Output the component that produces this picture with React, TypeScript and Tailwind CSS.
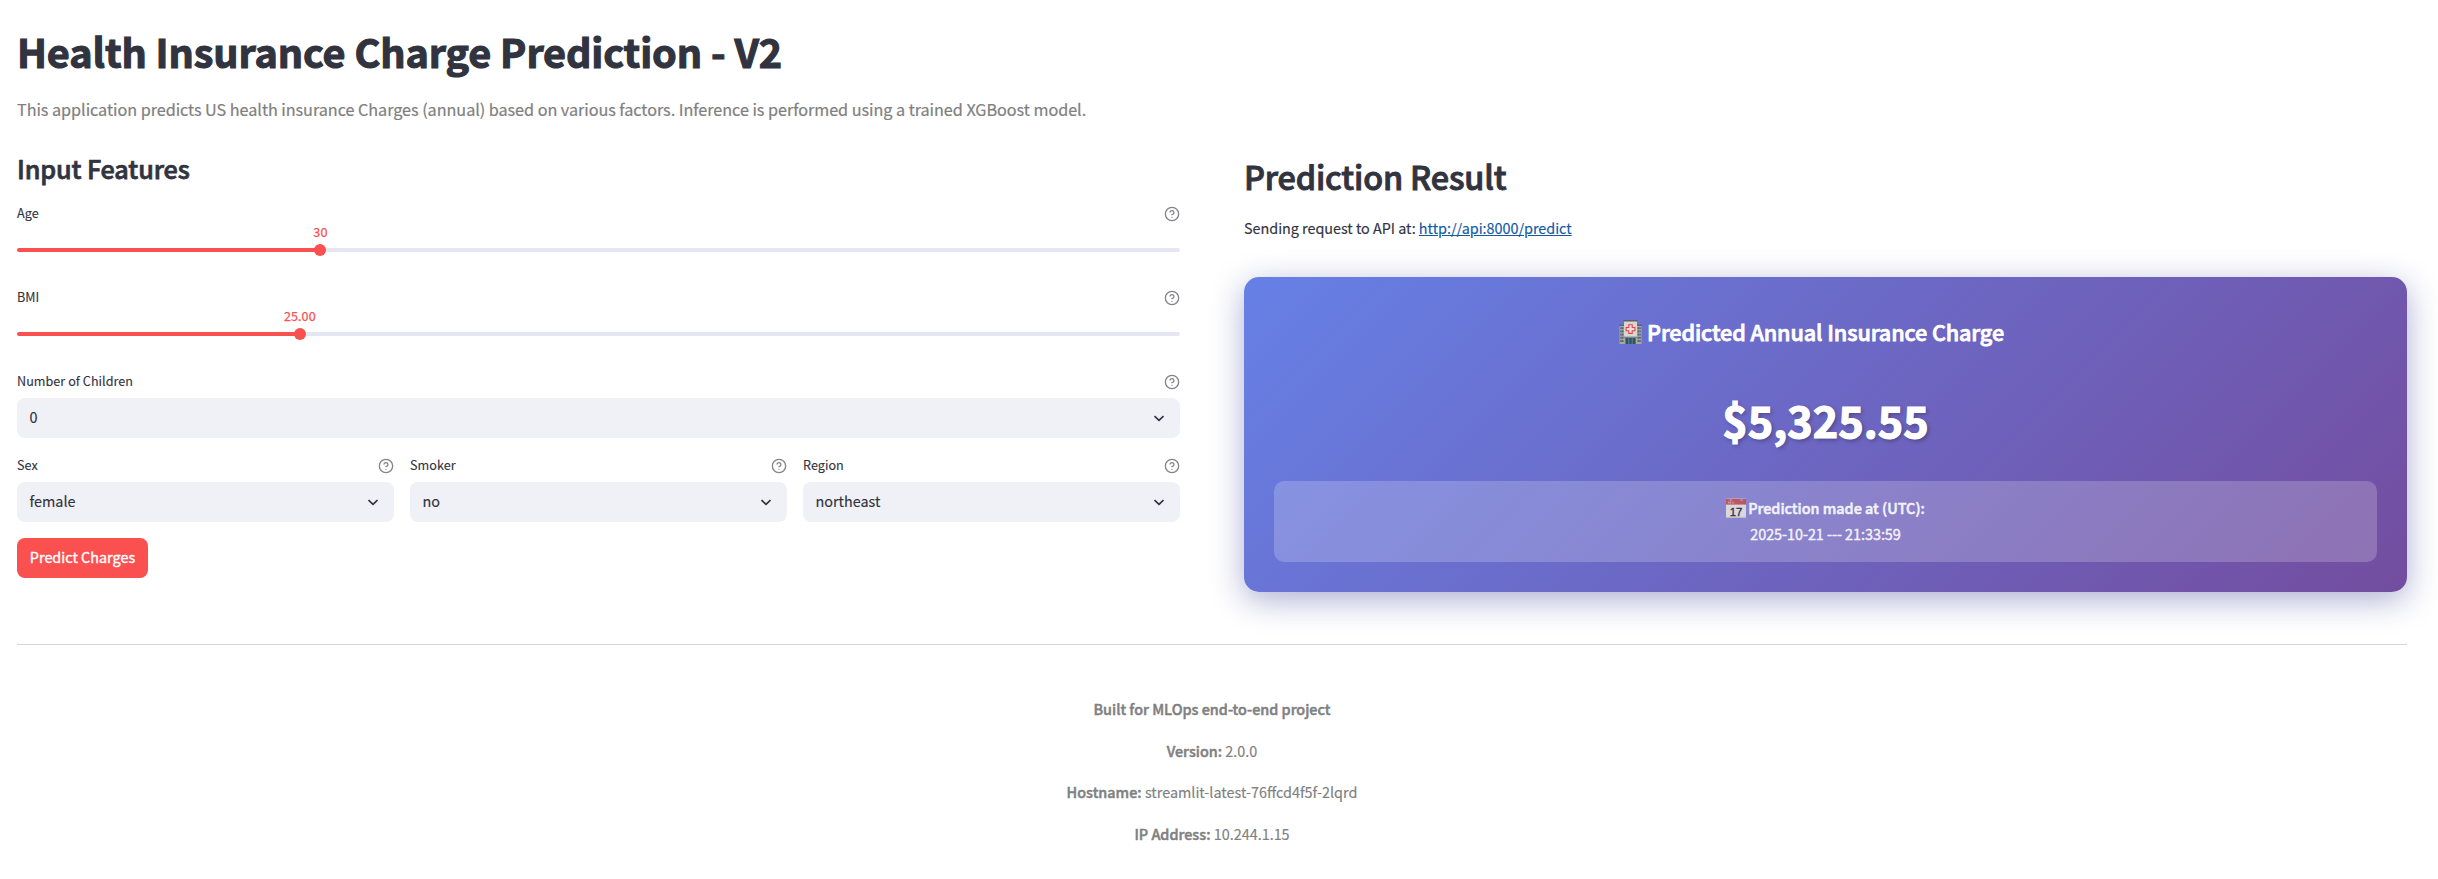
import React from "react";

function HelpIcon() {
  return (
    <svg className="size-4 shrink-0 text-[#83848c]" viewBox="0 0 24 24" fill="none" stroke="currentColor" strokeWidth="2" strokeLinecap="round" strokeLinejoin="round">
      <circle cx="12" cy="12" r="10" />
      <path d="M9.09 9a3 3 0 0 1 5.83 1c0 2-3 3-3 3" />
      <line x1="12" y1="17" x2="12.01" y2="17" />
    </svg>
  );
}

function Chevron() {
  return (
    <svg className="h-[7px] w-[10px] shrink-0 text-[#31333f]" viewBox="0 0 10 7" fill="none" stroke="currentColor" strokeWidth="1.7">
      <path d="M0.5 1.1 L5 5.4 L9.5 1.1" strokeLinejoin="round" />
    </svg>
  );
}

function HospitalIcon() {
  return (
    <svg className="h-6 w-[23px] shrink-0" viewBox="0 0 23 24">
      <rect x="0.5" y="5" width="22" height="19" fill="#a9a89f" />
      <rect x="0" y="4.6" width="5.5" height="1.4" fill="#5d6570" />
      <rect x="17.5" y="4.6" width="5.5" height="1.4" fill="#5d6570" />
      {[7.2, 10.4, 13.6, 16.8, 20].map((y) => (
        <g key={y} fill="#3f5870">
          <rect x="1.4" y={y} width="1.2" height="2" />
          <rect x="3.2" y={y} width="1.2" height="2" />
          <rect x="18.6" y={y} width="1.2" height="2" />
          <rect x="20.4" y={y} width="1.2" height="2" />
        </g>
      ))}
      <rect x="5" y="1" width="13" height="16.5" fill="#d9d6d2" />
      <rect x="4.6" y="0" width="13.8" height="1.5" fill="#5b5f66" />
      <rect x="5" y="16.6" width="13" height="1.4" fill="#7d8487" />
      <rect x="6.4" y="18" width="10.2" height="6" fill="#2f5364" />
      <path d="M9.8 18v6M13.2 18v6" stroke="#6f98a8" strokeWidth="0.7" />
      <path d="M9.8 4.8h3.4v2.7h2.7v3.2h-2.7v2.7H9.8v-2.7H7.1V7.5h2.7z" fill="#f1dcda" stroke="#e0474c" strokeWidth="1.1" />
    </svg>
  );
}

function CalendarIcon() {
  return (
    <svg className="size-5 shrink-0" viewBox="0 0 20 20">
      <rect x="0" y="0.5" width="20" height="19.5" rx="0.6" fill="#e2e0e2" />
      <rect x="0" y="18.8" width="20" height="1.2" fill="#c4c2c8" />
      <path d="M0 0.8h20v5.8H0z" fill="#c4524f" />
      <path d="M2.4 5.8V3.4l1.1 1.8 1.1-1.8v2.4M6 5.8l1-2 1 2" stroke="#e7b4b4" strokeWidth="0.6" fill="none" />
      <circle cx="4.7" cy="1.9" r="1.3" fill="#9a93cf" />
      <circle cx="15.6" cy="1.9" r="1.3" fill="#9a93cf" />
      <text x="10.1" y="17.6" textAnchor="middle" fontSize="11.4" fontFamily="Liberation Sans, sans-serif" fill="#26262a" stroke="#26262a" strokeWidth="0.3">17</text>
    </svg>
  );
}

function Label({ text }: { text: string }) {
  return (
    <div className="flex h-6 items-center justify-between">
      <span className="pb-[2px] text-[12.6px] leading-[22px] tracking-[0.04px] [-webkit-text-stroke:0.12px_#31333f]">{text}</span>
      <HelpIcon />
    </div>
  );
}

function Slider({ label, value, percent }: { label: string; value: string; percent: number }) {
  return (
    <div className="h-[84px]">
      <Label text={label} />
      <div className="pt-[22px]">
        <div className="relative h-1 rounded-full bg-[#e4e7f2]">
          <div className="h-1 rounded-full bg-[#fa5050]" style={{ width: `${percent}%` }} />
          <div className="absolute -top-1 size-3 -translate-x-1/2 rounded-full bg-[#fa5050]" style={{ left: `${percent}%` }} />
          <div
            className="absolute -top-[26px] -translate-x-1/2 text-[12.6px] leading-5 tracking-[0.08px] text-[#fa5050] [-webkit-text-stroke:0.25px_#fa5050]"
            style={{ left: `${percent}%` }}
          >
            {value}
          </div>
        </div>
      </div>
    </div>
  );
}

function Select({ label, value }: { label: string; value: string }) {
  return (
    <div className="flex flex-1 flex-col gap-1 pb-4">
      <Label text={label} />
      <div className="flex h-10 items-center justify-between rounded-lg bg-[#f0f1f6] pr-4 pl-[12.5px]">
        <span className="pb-[2px] text-[14.4px] leading-6 [-webkit-text-stroke:0.15px_#31333f]">{value}</span>
        <Chevron />
      </div>
    </div>
  );
}

const details = [
  { name: "Version:", value: "2.0.0" },
  { name: "Hostname:", value: "streamlit-latest-76ffcd4f5f-2lqrd" },
  { name: "IP Address:", value: "10.244.1.15" },
];

export default function App() {
  return (
    <div className="h-[879px] overflow-hidden bg-white pt-[25px] pr-[31px] pl-[17px] font-['Noto_Sans_CJK_SC','Noto_Sans',sans-serif] text-[#31333f]">
      <h1 className="text-[39.6px] leading-[52px] font-bold tracking-[-0.09px] [-webkit-text-stroke:1.1px_#31333f]">Health Insurance Charge Prediction - V2</h1>
      <p className="mt-[18px] text-[16.2px] leading-7 tracking-[-0.035px] text-[#808080] [-webkit-text-stroke:0.2px_#808080]">
        This application predicts US health insurance Charges (annual) based on various factors. Inference is performed using a trained XGBoost model.
      </p>

      <div className="mt-4 grid grid-cols-2 gap-16">
        <section className="pt-3">
          <h3 className="mb-[17px] text-[25.2px] leading-[34px] font-medium tracking-[-0.12px] [-webkit-text-stroke:0.75px_#31333f]">Input Features</h3>
          <Slider label="Age" value="30" percent={26.09} />
          <Slider label="BMI" value="25.00" percent={24.32} />
          <Select label="Number of Children" value="0" />
          <div className="flex gap-4">
            <Select label="Sex" value="female" />
            <Select label="Smoker" value="no" />
            <Select label="Region" value="northeast" />
          </div>
          <button className="flex h-10 w-[131px] items-center justify-center rounded-lg bg-[#fa5050] pb-[2px] text-[14.4px] text-white [-webkit-text-stroke:0.35px_#ffffff]">
            Predict Charges
          </button>
        </section>

        <section className="pt-[15px]">
          <h2 className="text-[32.4px] leading-[44px] font-medium tracking-[-0.17px] [-webkit-text-stroke:0.95px_#31333f]">Prediction Result</h2>
          <p className="mt-[18px] text-[14.4px] leading-6 tracking-[-0.03px] [-webkit-text-stroke:0.15px]">
            Sending request to API at: <a className="text-[#1359a6] underline [text-decoration-skip-ink:auto]">http://api:8000/predict</a>
          </p>
          <div className="mt-[37px] h-[315px] rounded-[15px] bg-[linear-gradient(135deg,#6680e6_0%,#734d9f_100%)] p-[30px] text-white shadow-[0_8px_32px_rgba(31,38,135,0.37)]">
            <div className="mt-[10px] flex items-center justify-center gap-[5px] pr-7">
              <HospitalIcon />
              <h3 className="text-[21.6px] leading-[30px] font-medium tracking-[-0.1px] [-webkit-text-stroke:0.75px_#ffffff]">Predicted Annual Insurance Charge</h3>
            </div>
            <div className="mt-[42px] text-center text-[43.2px] leading-[60px] font-bold [-webkit-text-stroke:1.2px_#ffffff] [text-shadow:2px_2px_4px_rgba(0,0,0,0.3)]">$5,325.55</div>
            <div className="mt-8 h-[81px] rounded-[10px] bg-white/20 pt-[14px]">
              <div className="text-center text-[14.4px] leading-[26px] opacity-90">
                <div className="flex items-center justify-center gap-[2px]">
                  <CalendarIcon />
                  <span className="font-medium [-webkit-text-stroke:0.5px_#ffffff]">Prediction made at (UTC):</span>
                </div>
                <div className="tracking-[-0.03px] [-webkit-text-stroke:0.4px_#ffffff]">2025-10-21 --- 21:33:59</div>
              </div>
            </div>
          </div>
        </section>
      </div>

      <hr className="mt-[52px] border-t border-[#d6d6d9]" />
      <footer className="mt-[51px] flex flex-col items-center gap-4 text-[14.4px] leading-[25.6px] text-[#808080] [-webkit-text-stroke:0.15px_#808080]">
        <p className="font-medium [-webkit-text-stroke:0.45px_#808080]">Built for MLOps end-to-end project</p>
        {details.map((d) => (
          <p key={d.name}>
            <strong className="font-medium [-webkit-text-stroke:0.45px_#808080]">{d.name}</strong> {d.value}
          </p>
        ))}
      </footer>
    </div>
  );
}
